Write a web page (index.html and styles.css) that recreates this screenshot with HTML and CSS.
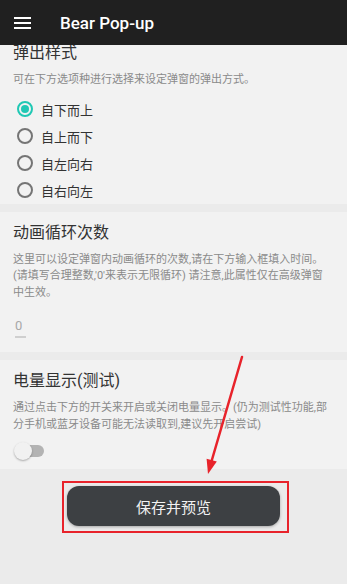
FILE: index.html
```html
<!DOCTYPE html>
<html lang="zh-CN">
<head>
  <meta charset="UTF-8">
  <meta name="viewport" content="width=device-width, initial-scale=1.0">
  <title>Bear Pop-up</title>
  <link rel="stylesheet" href="styles.css">
</head>
<body>
  <div class="page">
    <!-- 顶部栏 -->
    <header class="appbar">
      <svg class="menu" width="17" height="14" viewBox="0 0 17 14">
        <rect x="0" y="1" width="17" height="2" fill="#fff"/>
        <rect x="0" y="6" width="17" height="2" fill="#fff"/>
        <rect x="0" y="11" width="17" height="2" fill="#fff"/>
      </svg>
      <h1 class="appbar-title">Bear Pop-up</h1>
    </header>

    <main class="content">
      <!-- 弹出样式 -->
      <section class="card card-style">
        <h2 class="card-title">弹出样式</h2>
        <p class="card-desc">可在下方选项种进行选择来设定弹窗的弹出方式。</p>
        <ul class="radios">
          <li class="radio checked"><span class="dot"></span>自下而上</li>
          <li class="radio"><span class="dot"></span>自上而下</li>
          <li class="radio"><span class="dot"></span>自左向右</li>
          <li class="radio"><span class="dot"></span>自右向左</li>
        </ul>
      </section>

      <!-- 动画循环次数 -->
      <section class="card card-loop">
        <h2 class="card-title">动画循环次数</h2>
        <p class="card-desc">这里可以设定弹窗内动画循环的次数,请在下方输入框填入时间。(请填写合理整数,'0'来表示无限循环) 请注意,此属性仅在高级弹窗<br>中生效。</p>
        <div class="num-input">0</div>
      </section>

      <!-- 电量显示 -->
      <section class="card card-battery">
        <h2 class="card-title">电量显示(测试)</h2>
        <p class="card-desc">通过点击下方的开关来开启或关闭电量显示。(仍为测试性功能,部分手机或蓝牙设备可能无法读取到,建议先开启尝试)</p>
        <div class="switch"><span class="track"></span><span class="thumb"></span></div>
      </section>

      <!-- 保存按钮 -->
      <div class="save-wrap">
        <div class="mark">
          <button class="save-btn">保存并预览</button>
        </div>
      </div>
    </main>

    <!-- 红色箭头标注 -->
    <svg class="arrow" width="347" height="584" viewBox="0 0 347 584">
      <line x1="242" y1="357" x2="211.6" y2="461" stroke="#e8232b" stroke-width="2.5" stroke-linecap="round"/>
      <polygon points="208,474 216.8,461.6 206.6,458.8" fill="#e8232b"/>
    </svg>
  </div>
</body>
</html>
```

FILE: styles.css
```css
* {
  margin: 0;
  padding: 0;
  box-sizing: border-box;
}
ul {
  list-style: none;
}
body {
  width: 347px;
  height: 584px;
  overflow: hidden;
  background-color: #ebebeb;
  font-family: "Roboto", "Noto Sans CJK SC", sans-serif;
}
.page {
  position: relative;
  height: 584px;
  overflow: hidden;
}
/* 顶部栏 */
.appbar {
  position: relative;
  z-index: 2;
  display: flex;
  align-items: center;
  height: 45px;
  padding-left: 14px;
  background-color: #202020;
}
.appbar .menu {
  display: block;
}
.appbar-title {
  margin-left: 29px;
  font-size: 17px;
  font-weight: 500;
  color: #fff;
}
/* 卡片 */
.content {
  display: flex;
  flex-direction: column;
  gap: 8px;
}
.card {
  padding: 10px 13px 0;
  background-color: #f2f2f2;
}
.card-style {
  margin-top: -13px;
}
.card-title {
  font-size: 16px;
  line-height: 22px;
  font-weight: 400;
  color: #333;
}
.card-desc {
  margin-top: 8px;
  font-size: 11px;
  line-height: 16.5px;
  color: #8a8a8a;
}
/* 单选 */
.radios {
  margin-top: 7px;
}
.radio {
  display: flex;
  align-items: center;
  height: 27px;
  font-size: 13px;
  color: #333;
}
.radio .dot {
  width: 16px;
  height: 16px;
  margin: 0 8px 0 4px;
  border: 2px solid #757575;
  border-radius: 50%;
  position: relative;
}
.radio.checked .dot {
  border-color: #20c8b4;
}
.radio.checked .dot::after {
  content: "";
  position: absolute;
  left: 2px;
  top: 2px;
  width: 8px;
  height: 8px;
  border-radius: 50%;
  background-color: #20c8b4;
}
/* 输入框 */
.card-loop {
  padding-bottom: 14px;
}
.num-input {
  width: 11px;
  margin: 17px 0 0 2px;
  padding-bottom: 2px;
  border-bottom: 2px solid #cfcfcf;
  font-size: 13px;
  line-height: 16px;
  color: #a8a8a8;
}
/* 开关 */
.card-battery {
  padding-bottom: 9px;
}
.switch {
  position: relative;
  width: 30px;
  height: 18px;
  margin: 9px 0 0 1px;
}
.switch .track {
  position: absolute;
  left: 4px;
  top: 3px;
  width: 26px;
  height: 12px;
  border-radius: 6px;
  background-color: #b3b3b3;
}
.switch .thumb {
  position: absolute;
  left: 0;
  top: 0;
  width: 18px;
  height: 18px;
  border-radius: 50%;
  background-color: #f1f1f1;
  box-shadow: 0 1px 2px rgba(0,0,0,0.3);
}
/* 保存按钮 */
.save-wrap {
  display: flex;
  padding: 4px 0 0 62px;
}
.mark {
  padding: 3px 7px 5px 3px;
  border: 2px solid #e8232b;
}
.save-btn {
  display: block;
  width: 213px;
  height: 40px;
  border: none;
  border-radius: 12px;
  background-color: #3d4043;
  box-shadow: 0 1px 3px rgba(0,0,0,0.3);
  font-family: "Roboto", "Noto Sans CJK SC", sans-serif;
  font-size: 15px;
  color: #f2f2f2;
}
/* 标注箭头 */
.arrow {
  position: absolute;
  left: 0;
  top: 0;
  z-index: 3;
  pointer-events: none;
}
```
